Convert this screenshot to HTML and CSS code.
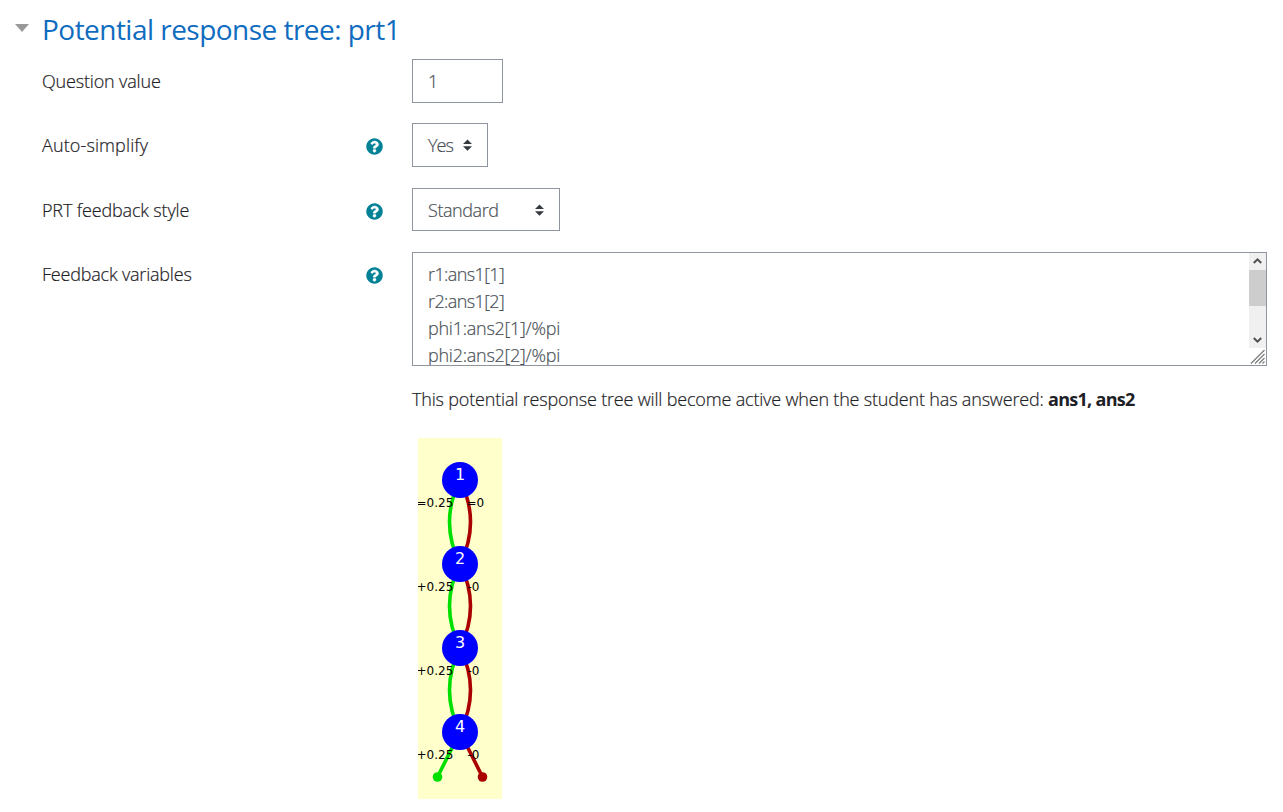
FILE: index.html
```html
<!DOCTYPE html>
<html lang="en">
<head>
<meta charset="utf-8">
<title>Potential response tree: prt1</title>
<link rel="stylesheet" href="styles.css">
</head>
<body>
<svg width="0" height="0" class="defs">
  <symbol id="help" viewBox="0 0 512 512"><path fill="#008196" d="M504 256c0 137-111 248-248 248S8 393 8 256C8 119.100 119 8 256 8s248 111.100 248 248z"/><path fill="#fff" stroke="#fff" stroke-width="12" d="M262.700 90c-54.500 0-89.300 23-116.500 63.800-3.600 5.300-2.400 12.500 2.700 16.300l34.700 26.300c5.200 3.900 12.600 3 16.700-2.100 17.900-22.700 30.100-35.800 57.300-35.800 20.400 0 45.700 13.100 45.700 33 0 15-12.400 22.700-32.500 34C247.100 238.500 216 254.900 216 296v4c0 6.600 5.400 12 12 12h56c6.600 0 12-5.400 12-12v-1.300c0-28.500 83.200-29.600 83.200-106.700 0-58-60.200-102-116.500-102zM256 338c-25.400 0-46 20.600-46 46s20.600 46 46 46 46-20.600 46-46-20.600-46-46-46z"/></symbol>
  <symbol id="sort" viewBox="0 0 4 5"><path fill="#343a40" d="M2 0L0 2h4zm0 5L0 3h4z"/></symbol>
</svg>
<main class="section">
  <header class="heading">
    <svg class="caret" width="14" height="8" viewBox="0 0 14 8"><path d="M0 0h14L7 8z" fill="#999"/></svg>
    <h1><span class="t-head">Potential response tree: prt1</span></h1>
  </header>
  <div class="row">
    <div class="label"><span class="t-qv">Question value</span></div>
    <div class="control value">1</div>
  </div>
  <div class="row">
    <div class="label"><span class="t-auto">Auto-simplify</span><svg class="help"><use href="#help"/></svg></div>
    <div class="control select yes"><span class="t-yes">Yes</span><svg class="sort"><use href="#sort"/></svg></div>
  </div>
  <div class="row third">
    <div class="label"><span class="t-prt">PRT feedback style</span><svg class="help"><use href="#help"/></svg></div>
    <div class="control select standard"><span class="t-std">Standard</span><svg class="sort"><use href="#sort"/></svg></div>
  </div>
  <div class="row variables">
    <div class="label"><span class="t-fv">Feedback variables</span><svg class="help"><use href="#help"/></svg></div>
    <div class="area">
      <div class="lines"><div><span class="t-r">r1:ans1[1]</span></div><div><span class="t-r">r2:ans1[2]</span></div><div><span class="t-phi">phi1:ans2[1]/%pi</span></div><div><span class="t-phi">phi2:ans2[2]/%pi</span></div></div>
      <svg class="scroll" width="17" height="112" viewBox="0 0 17 112">
        <path fill="#f0f0f0" d="M0 0h17v95H0z"/><path fill="#cdcdcd" d="M0 17h17v36H0z"/>
        <path d="M4.800 10l3.700-3.700 3.700 3.700M4.800 85l3.700 3.700 3.700-3.700" fill="none" stroke="#505050" stroke-width="2"/>
        <path d="M2 110.500L15.500 97M6 110.500l9.500-9.500M10 110.500l5.500-5.500M13.500 110.500l2-2" fill="none" stroke="#777" stroke-width="1.100"/>
      </svg>
    </div>
  </div>
  <div class="result">
    <p><span class="t-res">This potential response tree will become active when the student has answered: </span><b class="t-ans">ans1, ans2</b></p>
    <svg class="tree" width="84" height="361" viewBox="0 0 84 361">
      <rect width="84" height="361" fill="#ffc"/>
      <g fill="none" stroke-width="3.600" stroke="#00e000"><path d="M42 42Q21 84 42 126Q21 168 42 210Q21 252 42 294L19.500 339"/></g>
      <g fill="none" stroke-width="3.600" stroke="#a00"><path d="M42 42Q63 84 42 126Q63 168 42 210Q63 252 42 294L64.500 339"/></g>
      <circle cx="19.500" cy="339" r="4.800" fill="#00e000"/><circle cx="64.500" cy="339" r="4.800" fill="#a00"/>
      <g fill="#00f"><circle cx="42" cy="42" r="18"/><circle cx="42" cy="126" r="18"/><circle cx="42" cy="210" r="18"/><circle cx="42" cy="294" r="18"/></g>
      <g class="node"><text x="42" y="42">1</text><text x="42" y="126">2</text><text x="42" y="210">3</text><text x="42" y="294">4</text></g>
      <g class="score"><text x="-1.500" y="69">=0.25</text><text x="-1.500" y="153">+0.25</text><text x="-1.500" y="237">+0.25</text><text x="-1.500" y="321">+0.25</text><text x="48.500" y="69">=0</text><text x="49.500" y="153">-0</text><text x="49.500" y="237">-0</text><text x="49.500" y="321">-0</text></g>
    </svg>
  </div>
</main>
</body>
</html>
```
FILE: styles.css
```css
* { box-sizing: border-box; }
body { margin: 0; background: #fff; color: #1d2125; font: 300 18px/27px "Open Sans", "Noto Sans", sans-serif; }
.defs { display: block; }
.section { height: 812px; overflow: hidden; }
.heading { display: flex; height: 59px; padding-left: 15px; gap: 13px; }
.caret { margin-top: 24px; }
h1 { margin: 9px 0 0; font-size: 28px; line-height: 41px; font-weight: 400; color: #0f6cbf; white-space: nowrap; }
.t-head { letter-spacing: -0.53px; }
.t-qv { letter-spacing: -0.17px; }
.t-auto { letter-spacing: 0.12px; }
.t-prt { letter-spacing: -0.16px; }
.t-fv { letter-spacing: -0.2px; }
.t-yes { letter-spacing: -0.9px; }
.t-std { letter-spacing: -0.42px; }
.t-r { letter-spacing: -0.6px; }
.t-phi { letter-spacing: -0.25px; }
.t-res { letter-spacing: -0.18px; }
.t-ans { letter-spacing: -0.72px; }
.label, .control, .lines, .t-res { -webkit-text-stroke-width: 0.2px; }
.row { display: flex; height: 64px; padding-left: 42px; }
.third { margin-top: 1px; }
.label { display: flex; justify-content: space-between; width: 370px; padding: 9px 29px 0 0; white-space: nowrap; }
.help { width: 17px; height: 17px; margin-top: 6px; }
.control { height: 44px; border: 1px solid #8f959e; padding: 8px 15px; color: #495057; }
.third .control { height: 43px; padding: 8px 15px 6px; }
.value { width: 91px; }
.select { display: flex; justify-content: space-between; align-items: center; }
.yes { width: 76px; }
.standard { width: 148px; }
.sort { width: 9px; height: 12px; }
.standard .sort { margin-bottom: 2px; }
.variables { height: 114px; }
.area { width: 855px; height: 114px; border: 1px solid #8f959e; display: flex; justify-content: space-between; overflow: hidden; color: #495057; }
.lines { padding: 8px 15px; white-space: nowrap; }
.scroll { flex: none; }
.result { padding: 20px 0 0 412px; }
.result p { margin: 0; white-space: nowrap; }
.result b { font-weight: 700; }
.tree { display: block; margin: 25px 0 0 6px; }
.node { fill: #fff; font: 400 16px "DejaVu Sans", sans-serif; text-anchor: middle; }
.score { fill: #000; font: 400 12px "DejaVu Sans", sans-serif; }
```
